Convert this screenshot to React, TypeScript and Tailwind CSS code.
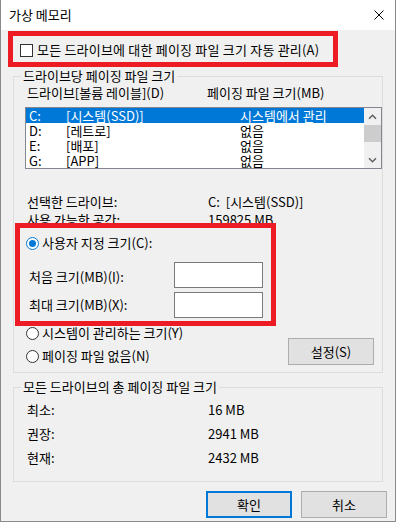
import React from "react";

const font = { fontFamily: '"Noto Sans CJK KR", "Noto Sans", sans-serif' };

type Drive = { letter: string; label: string; size: string; selected?: boolean };

const drives: Drive[] = [
  { letter: "C:", label: "[시스템(SSD)]", size: "시스템에서 관리", selected: true },
  { letter: "D:", label: "[레트로]", size: "없음" },
  { letter: "E:", label: "[배포]", size: "없음" },
  { letter: "G:", label: "[APP]", size: "없음" },
];

function Radio({ checked }: { checked?: boolean }) {
  return (
    <span
      className={`flex h-[13px] w-[13px] shrink-0 items-center justify-center rounded-full border bg-white ${
        checked ? "border-[#0078d7]" : "border-[#333333]"
      }`}
    >
      {checked && <span className="h-[7px] w-[7px] rounded-full bg-[#0078d7]" />}
    </span>
  );
}

function Chevron({ down }: { down?: boolean }) {
  return (
    <svg width="9" height="6" viewBox="0 0 9 6">
      <path
        d={down ? "M1 1.2 L4.5 4.7 L8 1.2" : "M1 4.8 L4.5 1.3 L8 4.8"}
        fill="none"
        stroke="#606060"
        strokeWidth="1.5"
      />
    </svg>
  );
}

export default function App() {
  return (
    <div
      className="relative h-[523px] w-[396px] overflow-hidden bg-white text-[13px] leading-4 text-black"
      style={font}
    >
      <div className="flex h-[522px] flex-col border-x border-b border-[#8a8a8a]">
        {/* Title bar */}
        <div className="flex h-[30px] shrink-0 items-center justify-between bg-white pl-[8px] pr-[11px]">
          <span className="text-[13px]">가상 메모리</span>
          <svg width="10" height="10" viewBox="0 0 10 10">
            <path d="M0.5 0.5 L9.5 9.5 M9.5 0.5 L0.5 9.5" stroke="#000" strokeWidth="1" />
          </svg>
        </div>

        {/* Body */}
        <div className="flex flex-1 flex-col bg-[#f0f0f0]">
          {/* Auto manage checkbox (annotated) */}
          <div className="ml-[7px] mt-[1px] h-[36px] w-[330px] border-[5px] border-[#ed1c24]">
            <div className="ml-[7px] mt-[6px] flex items-center gap-[4px]">
              <span className="h-[13px] w-[13px] shrink-0 border border-[#333333] bg-white" />
              <span className="tracking-[0.2px]">모든 드라이브에 대한 페이징 파일 크기 자동 관리(A)</span>
            </div>
          </div>

          {/* Per-drive group */}
          <fieldset className="ml-[12px] mt-[1px] h-[305px] w-[370px] border border-[#dcdcdc]">
            <legend className="ml-[7px] px-[2px] leading-4">드라이브당 페이징 파일 크기</legend>

            <div className="mt-[1px] flex pl-[13px]">
              <span className="w-[180px]">드라이브[볼륨 레이블](D)</span>
              <span>페이징 파일 크기(MB)</span>
            </div>

            <div className="ml-[11px] mt-[6px] flex h-[62px] w-[357px] border border-[#828790] bg-white">
              <div className="flex-1">
                {drives.map((d) => (
                  <div
                    key={d.letter}
                    className={`flex h-[15px] items-center pl-[3px] leading-[15px] ${
                      d.selected ? "bg-[#0078d7] text-white" : ""
                    }`}
                  >
                    <span className="w-[37px]">{d.letter}</span>
                    <span className="w-[174px]">{d.label}</span>
                    <span>{d.size}</span>
                  </div>
                ))}
              </div>
              <div className="flex w-[17px] flex-col bg-[#f0f0f0]">
                <div className="flex h-[17px] items-center justify-center">
                  <Chevron />
                </div>
                <div className="h-[17px] bg-[#cdcdcd]" />
                <div className="flex-1" />
                <div className="flex h-[17px] items-center justify-center">
                  <Chevron down />
                </div>
              </div>
            </div>

            <div className="mt-[25px] flex pl-[13px]">
              <span className="w-[181px]">선택한 드라이브:</span>
              <span className="whitespace-pre">C:  [시스템(SSD)]</span>
            </div>
            <div className="mt-[2px] flex pl-[13px]">
              <span className="w-[181px]">사용 가능한 공간:</span>
              <span>159825 MB</span>
            </div>

            <div className="mt-[7px] flex items-center gap-[3px] pl-[12px]">
              <Radio checked />
              <span>사용자 지정 크기(C):</span>
            </div>

            <div className="mt-[11px] flex items-center pl-[15px]">
              <span className="w-[145px] pt-[3px]">처음 크기(MB)(I):</span>
              <div className="h-[26px] w-[89px] border border-[#7a7a7a] bg-white" />
            </div>
            <div className="mt-[4px] flex items-center pl-[15px]">
              <span className="w-[145px]">최대 크기(MB)(X):</span>
              <div className="h-[26px] w-[89px] border border-[#7a7a7a] bg-white" />
            </div>

            <div className="mt-[7px] flex">
              <div className="flex flex-1 flex-col gap-[7px] pl-[12px]">
                <div className="flex items-center gap-[3px]">
                  <Radio />
                  <span>시스템이 관리하는 크기(Y)</span>
                </div>
                <div className="flex items-center gap-[3px]">
                  <Radio />
                  <span>페이징 파일 없음(N)</span>
                </div>
              </div>
              <button className="mr-[8px] mt-[13px] h-[27px] w-[86px] border border-[#adadad] bg-[#e1e1e1]">
                설정(S)
              </button>
            </div>
          </fieldset>

          {/* Totals group */}
          <fieldset className="ml-[12px] mt-[6px] h-[103px] w-[370px] border border-[#dcdcdc]">
            <legend className="ml-[7px] px-[2px] leading-4">모든 드라이브의 총 페이징 파일 크기</legend>
            <div className="mt-[7px] flex pl-[13px]">
              <span className="w-[181px]">최소:</span>
              <span>16 MB</span>
            </div>
            <div className="mt-[8px] flex pl-[13px]">
              <span className="w-[181px]">권장:</span>
              <span>2941 MB</span>
            </div>
            <div className="mt-[8px] flex pl-[13px]">
              <span className="w-[181px]">현재:</span>
              <span>2432 MB</span>
            </div>
          </fieldset>

          {/* Dialog buttons */}
          <div className="mt-[9px] flex justify-end gap-[9px] pr-[8px]">
            <button className="h-[27px] w-[86px] border-2 border-[#0078d7] bg-[#e1e1e1]">확인</button>
            <button className="h-[27px] w-[86px] border border-[#adadad] bg-[#e1e1e1]">취소</button>
          </div>
        </div>
      </div>

      {/* Red annotation over custom size section */}
      <div className="pointer-events-none absolute left-[15px] top-[223px] h-[103px] w-[261px] border-[5px] border-[#ed1c24]" />
    </div>
  );
}
